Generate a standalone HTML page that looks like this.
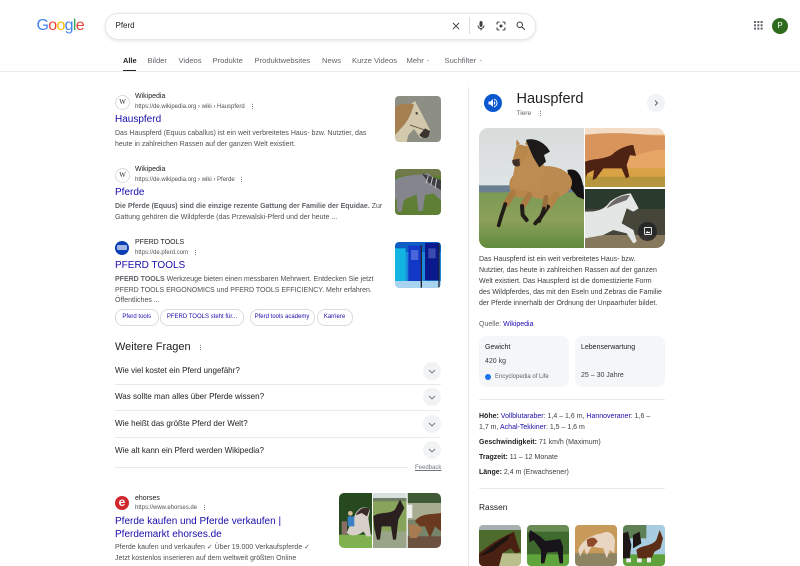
<!DOCTYPE html>
<html lang="de"><head><meta charset="utf-8"><title>Pferd - Google</title>
<style>
html,body{margin:0;padding:0;background:#fff}
body{position:relative;width:800px;height:566px;overflow:hidden;font-family:"Liberation Sans",Arial,sans-serif;color:#202124;filter:blur(.22px)}
.t{position:absolute;white-space:nowrap;line-height:12px;height:12px}
.s{font-size:7px;color:#4d5156}
.u{font-size:6px;color:#4d5156}
.n{font-size:7px;color:#202124}
.h{font-size:10px;color:#1a0dab}
.tab{font-size:7.6px;color:#5f6368;top:54.5px}
.q{font-size:8.05px;color:#202124;left:115px}
.k{font-size:7px;color:#3c4043;left:479px}
.k b{color:#202124}
a,.l{color:#1a0dab;text-decoration:none}
.a{position:absolute;display:block}
.ln{position:absolute;height:1px;background:#e8eaed}
.chip{position:absolute;top:309px;height:15px;border:.5px solid #dadce0;border-radius:8px;font-size:6px;line-height:15px;text-align:center;color:#1a0dab;box-sizing:content-box}
.ci{position:absolute;border-radius:50%}
.cb{width:18px;height:18px;background:#f1f3f4;left:423px}
.card{position:absolute;top:336px;width:90px;height:51px;border-radius:8px;background:#f5f6f7}
.im{position:absolute;overflow:hidden;border-radius:4px}
.im svg{display:block;filter:blur(.35px)}
.dots{position:absolute;width:1.4px;height:1.4px;background:#444;border-radius:50%;box-shadow:0 2.3px 0 #444,0 -2.3px 0 #444}
</style></head><body>

<!-- header -->
<div class="t" style="left:36.5px;top:16px;height:20px;line-height:20px;font-size:16px;letter-spacing:-.7px"><span style="color:#4285f4">G</span><span style="color:#ea4335">o</span><span style="color:#fbbc05">o</span><span style="color:#4285f4">g</span><span style="color:#34a853">l</span><span style="color:#ea4335">e</span></div>
<div class="a" style="left:105px;top:13px;width:429px;height:24.5px;border:.5px solid #e6e7e9;border-radius:13px;box-shadow:0 1px 3px rgba(60,64,67,.14);background:#fff"></div>
<div class="t" style="left:115.5px;top:19.5px;font-size:8px;color:#202124">Pferd</div>
<svg class="a" style="left:450px;top:20px" width="12" height="12" viewBox="0 0 24 24" fill="#4a4d51"><path d="M19 6.41L17.59 5 12 10.59 6.41 5 5 6.41 10.59 12 5 17.59 6.41 19 12 13.41 17.59 19 19 17.59 13.41 12z"/></svg>
<div class="a" style="left:468.5px;top:17px;width:.5px;height:17px;background:#dadce0"></div>
<svg class="a" style="left:475px;top:19.5px" width="12" height="12" viewBox="0 0 24 24" fill="#3c4043"><path d="M12 14c1.66 0 3-1.34 3-3V5c0-1.66-1.34-3-3-3S9 3.34 9 5v6c0 1.66 1.34 3 3 3z"/><path d="M17 11c0 2.76-2.24 5-5 5s-5-2.24-5-5H5c0 3.53 2.61 6.43 6 6.92V21h2v-3.08c3.39-.49 6-3.39 6-6.92h-2z"/></svg>
<svg class="a" style="left:495px;top:20px" width="12" height="12" viewBox="0 0 24 24" fill="none" stroke="#3c4043" stroke-width="2.2"><path d="M4 9V7a3 3 0 0 1 3-3h2M15 4h2a3 3 0 0 1 3 3v2M20 15v2a3 3 0 0 1-3 3h-2M9 20H7a3 3 0 0 1-3-3v-2"/><circle cx="12" cy="12" r="3" fill="#3c4043" stroke="none"/></svg>
<svg class="a" style="left:514.5px;top:20px" width="12" height="12" viewBox="0 0 24 24" fill="#3c4043"><path d="M15.5 14h-.79l-.28-.27A6.471 6.471 0 0 0 16 9.5 6.5 6.5 0 1 0 9.5 16c1.61 0 3.09-.59 4.23-1.57l.27.28v.79l5 4.99L20.49 19l-4.99-5zm-6 0C7.01 14 5 11.99 5 9.5S7.01 5 9.5 5 14 7.01 14 9.5 11.99 14 9.5 14z"/></svg>
<svg class="a" style="left:753.5px;top:21px" width="9" height="9" viewBox="0 0 9 9" fill="#5f6368"><rect width="2" height="2"/><rect x="3.3" width="2" height="2"/><rect x="6.6" width="2" height="2"/><rect y="3.3" width="2" height="2"/><rect x="3.3" y="3.3" width="2" height="2"/><rect x="6.6" y="3.3" width="2" height="2"/><rect y="6.6" width="2" height="2"/><rect x="3.3" y="6.6" width="2" height="2"/><rect x="6.6" y="6.6" width="2" height="2"/></svg>
<div class="ci" style="left:772px;top:18px;width:16px;height:16px;background:#2e6b1f;color:#fff;font-size:8px;line-height:16px;text-align:center">P</div>

<!-- tabs -->
<div class="t tab" style="left:123px;font-weight:bold;color:#202124;font-size:7.4px">Alle</div>
<div class="t tab" style="left:147.5px">Bilder</div>
<div class="t tab" style="left:178.5px">Videos</div>
<div class="t tab" style="left:212.5px">Produkte</div>
<div class="t tab" style="left:254.5px">Produktwebsites</div>
<div class="t tab" style="left:322px">News</div>
<div class="t tab" style="left:352px">Kurze Videos</div>
<div class="t tab" style="left:406.5px">Mehr</div>
<div class="a" style="left:427px;top:60px;border-left:1.6px solid transparent;border-right:1.6px solid transparent;border-top:1.6px solid #70757a"></div>
<div class="t tab" style="left:444.5px">Suchfilter</div>
<div class="a" style="left:479.8px;top:60px;border-left:1.6px solid transparent;border-right:1.6px solid transparent;border-top:1.6px solid #70757a"></div>
<div class="a" style="left:123px;top:69.5px;width:12.7px;height:1.5px;background:#202124"></div>
<div class="ln" style="left:0;top:71px;width:800px;background:#ebebeb"></div>

<!-- result 1 -->
<div class="ci" style="left:115px;top:94.5px;width:13px;height:13px;border:.5px solid #dadce0;font:7px/13px 'Liberation Serif',serif;text-align:center;color:#333">W</div>
<div class="t n" style="left:135px;top:91px">Wikipedia</div>
<div class="t u" style="left:135px;top:100.5px">https://de.wikipedia.org › wiki › Hauspferd</div>
<div class="dots" style="left:251.5px;top:106px"></div>
<div class="t h" style="left:115px;top:114px">Hauspferd</div>
<div class="t s" style="left:115px;top:127.5px">Das Hauspferd (Equus caballus) ist ein weit verbreitetes Haus- bzw. Nutztier, das</div>
<div class="t s" style="left:115px;top:138.5px">heute in zahlreichen Rassen auf der ganzen Welt existiert.</div>
<div class="im" style="left:395px;top:96px;width:46px;height:46px"><svg width="46" height="46" viewBox="885 33 138 138"><rect x="885" y="33" width="138" height="138" fill="#8e8f84"/><path d="M885 171V105L930 60 945 48 965 85 990 135 986 158 960 158 942 132 925 150 920 171z" fill="#d2c8ab"/><path d="M885 65C905 55 925 55 942 58 935 82 925 108 905 128L885 150z" fill="#a57f50"/><path d="M958 150C965 160 980 162 986 155L990 138 975 130z" fill="#3a3330"/><path d="M930 120L972 134" stroke="#4a4038" stroke-width="2" fill="none"/><circle cx="950" cy="85" r="3.5" fill="#3a3330"/></svg></div>

<!-- result 2 -->
<div class="ci" style="left:115px;top:167.5px;width:13px;height:13px;border:.5px solid #dadce0;font:7px/13px 'Liberation Serif',serif;text-align:center;color:#333">W</div>
<div class="t n" style="left:135px;top:164px">Wikipedia</div>
<div class="t u" style="left:135px;top:173.5px">https://de.wikipedia.org › wiki › Pferde</div>
<div class="dots" style="left:241px;top:179px"></div>
<div class="t h" style="left:115px;top:187px">Pferde</div>
<div class="t s" style="left:115px;top:200.5px"><b style="color:#5f6368">Die Pferde (Equus) sind die einzige rezente Gattung der Familie der Equidae.</b> Zur</div>
<div class="t s" style="left:115px;top:211.5px">Gattung gehören die Wildpferde (das Przewalski-Pferd und der heute ...</div>
<div class="im" style="left:395px;top:169px;width:46px;height:46px"><svg width="46" height="46" viewBox="885 252 138 138"><rect x="885" y="252" width="138" height="138" fill="#5f7f35"/><rect x="885" y="252" width="138" height="20" fill="#6f7a4a"/><path d="M885 285C910 268 950 272 985 265L1023 295V345L1000 325 975 330 968 378H955L950 328C930 338 915 338 910 350L905 380H892L890 345 885 340z" fill="#85858e"/><path d="M965 265L1023 285V315L985 292z" fill="#3d3d42"/><path d="M985 272L978 295M998 276L992 302M1010 282L1005 310" stroke="#c8c8cc" stroke-width="3"/></svg></div>

<!-- result 3 -->
<div class="ci" style="left:115px;top:240.5px;width:14px;height:14px;background:#0b3fb5"></div>
<div class="a" style="left:117px;top:245px;width:10px;height:5px;background:#c9d6f4;opacity:.8;border-radius:1px"></div>
<div class="t n" style="left:135px;top:237px">PFERD TOOLS</div>
<div class="t u" style="left:135px;top:246.5px">https://de.pferd.com</div>
<div class="dots" style="left:195px;top:252px"></div>
<div class="t h" style="left:115px;top:260px">PFERD TOOLS</div>
<div class="t s" style="left:115px;top:273.5px"><b style="color:#5f6368">PFERD TOOLS</b> Werkzeuge bieten einen messbaren Mehrwert. Entdecken Sie jetzt</div>
<div class="t s" style="left:115px;top:284.5px">PFERD TOOLS ERGONOMICS und PFERD TOOLS EFFICIENCY. Mehr erfahren.</div>
<div class="t s" style="left:115px;top:295px">Öffentliches ...</div>
<div class="im" style="left:395px;top:242px;width:46px;height:46px"><svg width="46" height="46" viewBox="885 21 138 138"><rect x="885" y="21" width="138" height="138" fill="#1e88d8"/><rect x="885" y="21" width="138" height="30" fill="#0e5fc4"/><rect x="885" y="40" width="32" height="100" fill="#12b4e4"/><rect x="925" y="32" width="38" height="108" fill="#1238c8"/><rect x="975" y="24" width="42" height="112" fill="#0a1a8c"/><rect x="885" y="138" width="138" height="21" fill="#a9d4f0"/><rect x="962" y="30" width="4" height="128" fill="#223"/><rect x="1015" y="24" width="4" height="134" fill="#223"/><rect x="933" y="45" width="22" height="30" fill="#5f7be0" opacity=".7"/><rect x="985" y="40" width="22" height="30" fill="#5060c0" opacity=".7"/></svg></div>
<div class="chip" style="left:115px;width:41.5px">Pferd tools</div>
<div class="chip" style="left:159.7px;width:82.5px">PFERD TOOLS steht für...</div>
<div class="chip" style="left:249.5px;width:63px">Pferd tools academy</div>
<div class="chip" style="left:316.5px;width:34px">Karriere</div>

<!-- PAA -->
<div class="t" style="left:115px;top:341px;font-size:11px;color:#202124">Weitere Fragen</div>
<div class="dots" style="left:200px;top:346.5px"></div>
<div class="t q" style="top:364.5px">Wie viel kostet ein Pferd ungefähr?</div>
<div class="t q" style="top:391px">Was sollte man alles über Pferde wissen?</div>
<div class="t q" style="top:418px">Wie heißt das größte Pferd der Welt?</div>
<div class="t q" style="top:444.5px">Wie alt kann ein Pferd werden Wikipedia?</div>
<div class="ln" style="left:115px;top:384px;width:326px"></div>
<div class="ln" style="left:115px;top:410px;width:326px"></div>
<div class="ln" style="left:115px;top:437px;width:326px"></div>
<div class="ln" style="left:115px;top:467px;width:293px"></div>
<div class="ci cb" style="top:362px"></div><div class="ci cb" style="top:388px"></div><div class="ci cb" style="top:415px"></div><div class="ci cb" style="top:441px"></div>
<svg class="a" style="left:423px;top:362px;overflow:visible" width="18" height="98" viewBox="0 0 18 98" fill="none" stroke="#70757a" stroke-width=".9"><path d="M6 8l3 3 3-3M6 34l3 3 3-3M6 61l3 3 3-3M6 87l3 3 3-3"/></svg>
<div class="t" style="left:415px;top:461.5px;font-size:6px;color:#70757a;text-decoration:underline">Feedback</div>

<!-- ehorses -->
<div class="ci" style="left:115px;top:496px;width:14px;height:14px;background:#d0282c;color:#fff;font:bold 12px/12px 'Liberation Sans',sans-serif;text-align:center">e</div>
<div class="t n" style="left:135px;top:492.5px">ehorses</div>
<div class="t u" style="left:135px;top:501.5px">https://www.ehorses.de</div>
<div class="dots" style="left:204px;top:507px"></div>
<div class="t h" style="left:115px;top:515.5px">Pferde kaufen und Pferde verkaufen |</div>
<div class="t h" style="left:115px;top:528.5px">Pferdemarkt ehorses.de</div>
<div class="t s" style="left:115px;top:542px">Pferde kaufen und verkaufen ✓ Über 19.000 Verkaufspferde ✓</div>
<div class="t s" style="left:115px;top:553px">Jetzt kostenlos inserieren auf dem weltweit größten Online</div>
<div class="im" style="left:339px;top:493px;width:102px;height:55px;border-radius:5px"><svg width="102" height="55" viewBox="12 15 306 165">
<rect x="12" y="15" width="99" height="165" fill="#26491f"/><rect x="12" y="140" width="99" height="40" fill="#7fb24f"/><path d="M60 80C70 60 90 50 105 65L100 90 108 145H95L85 130C70 145 45 145 35 135 45 110 55 95 60 80z" fill="#d8d0c8"/><path d="M62 82C72 62 90 52 104 64L96 85 80 75z" fill="#3a2a28"/><path d="M38 85h20v30H38z" fill="#3b7fc4"/><circle cx="46" cy="76" r="7" fill="#d9bf94"/><path d="M20 100h16v40H20z" fill="#8a6f66"/>
<rect x="114" y="15" width="101" height="165" fill="#88a45c"/><rect x="114" y="15" width="101" height="18" fill="#d8dfde"/><rect x="114" y="30" width="101" height="10" fill="#6f7f66"/><rect x="114" y="130" width="101" height="50" fill="#9aa488"/><path d="M115 85C130 70 165 80 180 65L195 35 208 60 190 95 183 155H174L168 115 140 115 135 155H126L118 120z" fill="#2a2020"/>
<rect x="218" y="15" width="100" height="165" fill="#76856a"/><rect x="218" y="15" width="100" height="30" fill="#3f5a35"/><rect x="218" y="45" width="100" height="50" fill="#a8ad92"/><rect x="218" y="145" width="100" height="35" fill="#6c5040"/><path d="M240 100C255 75 290 80 318 75V130L300 115 285 150 270 115 255 115z" fill="#6b3a1e"/><path d="M220 110C240 105 255 115 262 125L245 150 225 150z" fill="#a87a50"/><rect x="218" y="50" width="14" height="40" fill="#eee"/>
<rect x="111" y="15" width="3" height="165" fill="#fff"/><rect x="215" y="15" width="3" height="165" fill="#fff"/>
</svg></div>

<!-- panel -->
<div class="a" style="left:468px;top:87px;width:1px;height:479px;background:#e8eaed"></div>
<div class="ci" style="left:484px;top:94px;width:18px;height:18px;background:#0b57d0"></div>
<svg class="a" style="left:487px;top:97px" width="12" height="12" viewBox="0 0 24 24" fill="#fff"><path d="M3 9v6h4l5 5V4L7 9H3zm13.5 3A4.5 4.5 0 0 0 14 7.97v8.05A4.5 4.5 0 0 0 16.5 12z"/><path d="M14 3.23v2.06a7 7 0 0 1 0 13.42v2.06a9 9 0 0 0 0-17.54z"/></svg>
<div class="t" style="left:516.5px;top:92.5px;font-size:14.5px;color:#202124">Hauspferd</div>
<div class="t" style="left:516.5px;top:107.5px;font-size:6.5px;color:#5f6368">Tiere</div>
<div class="dots" style="left:539.5px;top:112.5px"></div>
<div class="ci" style="left:647px;top:94px;width:18px;height:18px;background:#f1f3f4"></div>
<svg class="a" style="left:647px;top:94px" width="18" height="18" fill="none" stroke="#5f6368" stroke-width="1"><path d="M8 6.5l2.5 2.5L8 11.5"/></svg>

<div class="im" style="left:479px;top:128px;width:186px;height:120px;border-radius:9px;background:#fff">
<svg style="position:absolute;left:0;top:0" width="105" height="120" viewBox="27 144 315 360"><defs><linearGradient id="sky" x1="0" y1="0" x2="0" y2="1"><stop offset="0" stop-color="#d9dcdb"/><stop offset="1" stop-color="#dfe4e6"/></linearGradient><linearGradient id="gr" x1="0" y1="0" x2="0" y2="1"><stop offset="0" stop-color="#7d9a55"/><stop offset=".5" stop-color="#8ba05a"/><stop offset="1" stop-color="#5f8a3c"/></linearGradient></defs><rect x="27" y="144" width="315" height="175" fill="url(#sky)"/><rect x="27" y="316" width="315" height="22" fill="#6a8092"/><rect x="27" y="337" width="315" height="167" fill="url(#gr)"/>
<path d="M292 270C322 262 342 285 342 358L322 350 302 325z" fill="#141212"/>
<ellipse cx="228" cy="308" rx="78" ry="50" fill="#bb8a50"/>
<ellipse cx="152" cy="315" rx="34" ry="38" fill="#b98649"/>
<path d="M148 200L180 195 228 265 200 340 122 322 134 262z" fill="#bd8c52"/>
<path d="M140 196C160 188 178 205 170 226L150 258C140 264 128 258 127 245z" fill="#b98749"/>
<path d="M138 196L140 178 150 192zM165 192L172 178 178 198z" fill="#b07f45"/>
<path d="M127 240L148 236 150 256C140 264 128 258 127 245z" fill="#3f3028"/>
<path d="M168 180C190 172 225 185 240 215L222 225 228 245 208 262 190 232 178 205z" fill="#1d1a1a"/>
<g fill="none" stroke-linecap="round"><path d="M128 340L108 372" stroke="#a97a42" stroke-width="20"/><path d="M106 372L94 408 86 436" stroke="#221c18" stroke-width="11"/><path d="M178 345L158 378" stroke="#a97a42" stroke-width="18"/><path d="M156 378L158 405 170 420" stroke="#221c18" stroke-width="12"/><path d="M258 345L236 378" stroke="#b38347" stroke-width="22"/><path d="M234 380L212 412 196 430" stroke="#221c18" stroke-width="12"/><path d="M228 352L222 385" stroke="#9a6f3c" stroke-width="14"/><path d="M222 385L208 424" stroke="#221c18" stroke-width="10"/></g></svg>
<svg style="position:absolute;left:106px;top:0" width="80" height="59" viewBox="345 144 240 177"><rect x="345" y="144" width="240" height="177" fill="#e6a766"/><rect x="345" y="144" width="240" height="20" fill="#f3dcc8"/><path d="M345 165C420 155 500 160 585 170V210C520 205 500 245 345 240z" fill="#d8945a"/><rect x="345" y="265" width="240" height="56" fill="#d9a345"/><rect x="345" y="290" width="240" height="31" fill="#b5953e"/><path d="M345 245C370 235 395 240 425 225 445 205 475 195 490 195L498 228 480 225 470 255 478 290 468 295 455 265 400 265 378 295 368 300 372 270 352 280 347 295z" fill="#4f2314"/></svg>
<svg style="position:absolute;left:106px;top:61px" width="80" height="59" viewBox="345 327 240 177"><rect x="345" y="327" width="240" height="177" fill="#454639"/><rect x="345" y="327" width="240" height="60" fill="#2a3a2c"/><rect x="345" y="465" width="240" height="39" fill="#85785c"/><path d="M345 395C370 395 400 395 420 365 445 345 475 340 482 340L506 385 490 395 470 385 455 430 490 450 500 485 490 490 470 460 430 450 400 465 345 475z" fill="#e4e6e6"/><path d="M410 385C430 355 455 345 480 345L470 360 430 375z" fill="#6f6a6a"/></svg>
<div class="ci" style="left:159px;top:93.5px;width:19px;height:19px;background:rgba(32,33,36,.82)"></div>
<svg class="a" style="left:163.5px;top:98px" width="10" height="10" viewBox="0 0 24 24" fill="none" stroke="#fff" stroke-width="2"><rect x="3.5" y="3.5" width="17" height="17" rx="1.5"/><path d="M6 17l4-5 3 3 2-2 3 4z" fill="#fff" stroke="none"/></svg>
</div>

<div class="t k" style="top:253.5px">Das Hauspferd ist ein weit verbreitetes Haus- bzw.</div>
<div class="t k" style="top:264.5px">Nutztier, das heute in zahlreichen Rassen auf der ganzen</div>
<div class="t k" style="top:275.5px">Welt existiert. Das Hauspferd ist die domestizierte Form</div>
<div class="t k" style="top:287px">des Wildpferdes, das mit den Eseln und Zebras die Familie</div>
<div class="t k" style="top:298px">der Pferde innerhalb der Ordnung der Unpaarhufer bildet.</div>
<div class="t k" style="top:318.5px;color:#5f6368">Quelle: <span class="l">Wikipedia</span></div>

<div class="card" style="left:479px"></div><div class="card" style="left:575px"></div>
<div class="t n" style="left:485px;top:342px">Gewicht</div>
<div class="t n" style="left:485px;top:356px;color:#3c4043">420 kg</div>
<div class="ci" style="left:485px;top:374px;width:6px;height:6px;background:#1a73e8"></div>
<div class="t" style="left:495px;top:371px;font-size:6px;color:#5f6368">Encyclopedia of Life</div>
<div class="t n" style="left:581px;top:342px">Lebenserwartung</div>
<div class="t n" style="left:581px;top:370px;color:#3c4043">25 – 30 Jahre</div>
<div class="ln" style="left:479px;top:399px;width:186px"></div>

<div class="t k" style="top:411px"><b>Höhe:</b> <span class="l">Vollblutaraber</span>: 1,4 – 1,6 m, <span class="l">Hannoveraner</span>: 1,6 –</div>
<div class="t k" style="top:422px">1,7 m, <span class="l">Achal-Tekkiner</span>: 1,5 – 1,6 m</div>
<div class="t k" style="top:437px"><b>Geschwindigkeit:</b> 71 km/h (Maximum)</div>
<div class="t k" style="top:452px"><b>Tragzeit:</b> 11 – 12 Monate</div>
<div class="t k" style="top:467px"><b>Länge:</b> 2,4 m (Erwachsener)</div>
<div class="ln" style="left:479px;top:488px;width:186px"></div>
<div class="t" style="left:479px;top:501px;font-size:8.4px;color:#202124">Rassen</div>

<div class="im" style="left:479px;top:525px;width:42px;height:41px"><svg width="42" height="41" viewBox="0 0 126 123"><rect width="126" height="123" fill="#4e6b2e"/><rect width="126" height="15" fill="#a9aeb0"/><rect y="85" width="126" height="38" fill="#b9c08c"/><path d="M0 85C30 60 60 40 95 25L105 20 115 55 125 80 110 85 95 70 70 85 60 123H0z" fill="#4a2012"/><path d="M0 95C30 70 60 45 95 28L85 45 40 80z" fill="#1c1210"/></svg></div>
<div class="im" style="left:527px;top:525px;width:42px;height:41px"><svg width="42" height="41" viewBox="0 0 126 123"><rect width="126" height="123" fill="#3f6a2e"/><rect width="126" height="20" fill="#6b8b55"/><rect y="88" width="126" height="35" fill="#5fa53c"/><path d="M5 30L10 15 40 35 55 48 100 42 108 65 108 115H98L92 80 60 82 52 115H42L42 75 20 45 8 52z" fill="#17141a"/></svg></div>
<div class="im" style="left:575px;top:525px;width:42px;height:41px"><svg width="42" height="41" viewBox="0 0 126 123"><rect width="126" height="123" fill="#c89a5a"/><rect y="85" width="126" height="38" fill="#8d8464"/><path d="M10 75C20 45 50 30 80 25 100 15 115 25 120 45L118 85 105 75 95 100 85 70 50 65 35 90 28 70 15 95z" fill="#e8d6c2"/><path d="M35 45C50 35 60 35 68 50L55 65 38 65z" fill="#8f4a2a"/></svg></div>
<div class="im" style="left:623px;top:525px;width:42px;height:41px"><svg width="42" height="41" viewBox="0 0 126 123"><rect width="126" height="123" fill="#a8cce0"/><rect y="0" width="70" height="40" fill="#5f7f55"/><rect y="88" width="126" height="35" fill="#5da23a"/><path d="M40 75C55 60 85 65 100 45L110 15 120 40 112 70 95 80 85 100 60 100 45 100z" fill="#5d2e16"/><path d="M0 25L15 20 25 60 20 100 0 100zM30 30L50 20 55 55 30 70z" fill="#1e1716"/><path d="M10 100h14v12H10zM42 100h14v12H42zM72 98h12v14H72z" fill="#eee"/></svg></div>

</body></html>
